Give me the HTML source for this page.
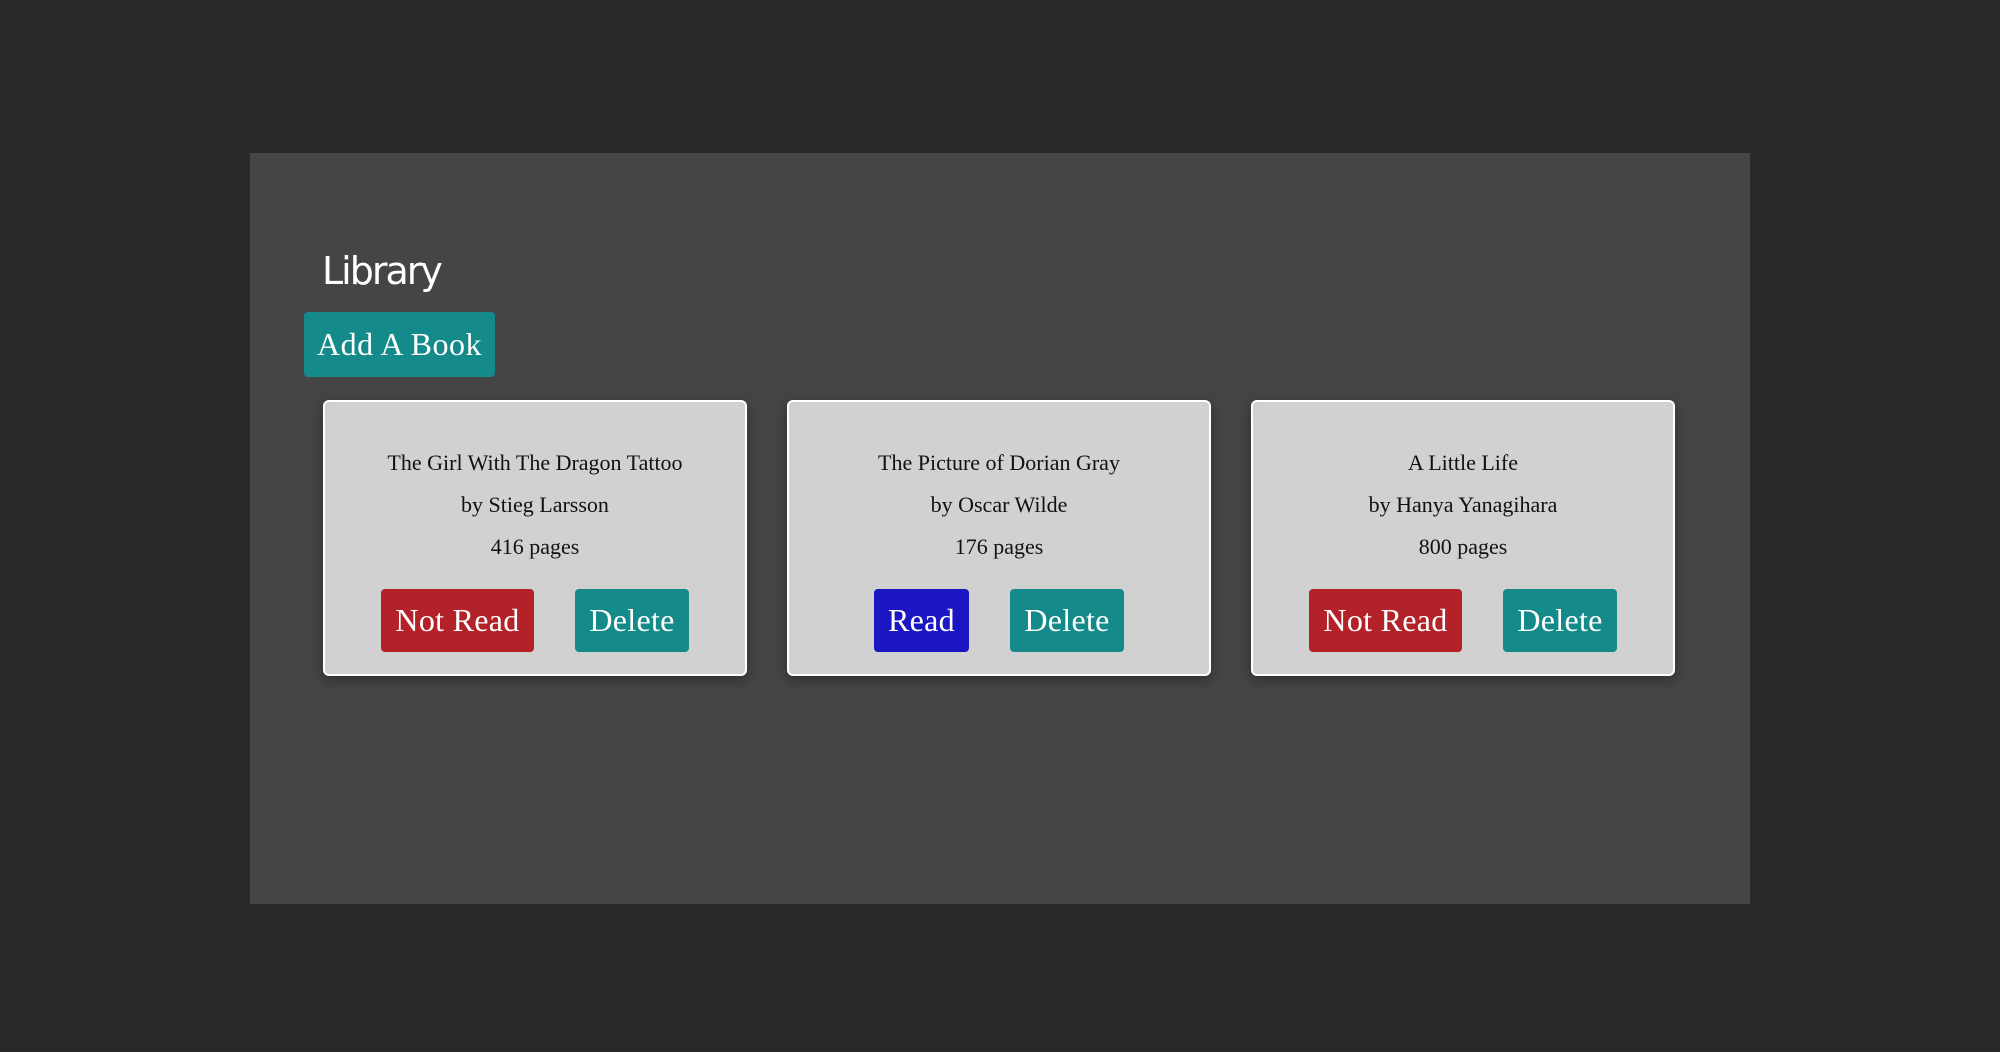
<!DOCTYPE html>
<html><head><meta charset="utf-8"><style>
html,body{margin:0;padding:0;}
body{width:2000px;height:1052px;background:#282828;position:relative;overflow:hidden;font-family:"Liberation Serif",serif;}
.panel{position:absolute;left:250px;top:153px;width:1500px;height:751px;background:#454545;}
h1{position:absolute;left:322px;top:249px;margin:0;font-family:"DejaVu Sans","Liberation Sans",sans-serif;font-weight:normal;font-size:38px;color:#fff;letter-spacing:-2px;}
.btn{position:absolute;color:#fff;font-family:"Liberation Serif",serif;border-radius:4px;display:flex;align-items:center;justify-content:center;box-sizing:border-box;}
.add{left:304px;top:312px;width:191px;height:65px;background:#148b8a;font-size:32px;letter-spacing:0.5px;}
.card{position:absolute;top:400px;width:424px;height:276px;box-sizing:border-box;background:#d1d1d1;border:2px solid #fff;border-radius:6px;box-shadow:0 4px 14px rgba(0,0,0,.35);text-align:center;color:#111;font-size:22px;}
.lines{position:absolute;left:0;right:0;top:40px;line-height:42px;}
.row{position:absolute;left:0;right:0;top:187px;height:63px;display:flex;justify-content:center;gap:41px;}
.row div{height:63px;color:#fff;font-size:32px;border-radius:4px;display:flex;align-items:center;justify-content:center;letter-spacing:0.3px;}
.red{background:#b22228;width:153px;}
.blue{background:#1a17c2;width:95px;}
.teal{background:#148b8a;width:114px;}
</style></head><body>
<div class="panel"></div>
<h1>Library</h1>
<div class="btn add">Add A Book</div>
<div class="card" style="left:323px"><div class="lines">The Girl With The Dragon Tattoo<br>by Stieg Larsson<br>416 pages</div><div class="row"><div class="red">Not Read</div><div class="teal">Delete</div></div></div>
<div class="card" style="left:787px"><div class="lines">The Picture of Dorian Gray<br>by Oscar Wilde<br>176 pages</div><div class="row"><div class="blue">Read</div><div class="teal">Delete</div></div></div>
<div class="card" style="left:1251px"><div class="lines">A Little Life<br>by Hanya Yanagihara<br>800 pages</div><div class="row"><div class="red">Not Read</div><div class="teal">Delete</div></div></div>
</body></html>
